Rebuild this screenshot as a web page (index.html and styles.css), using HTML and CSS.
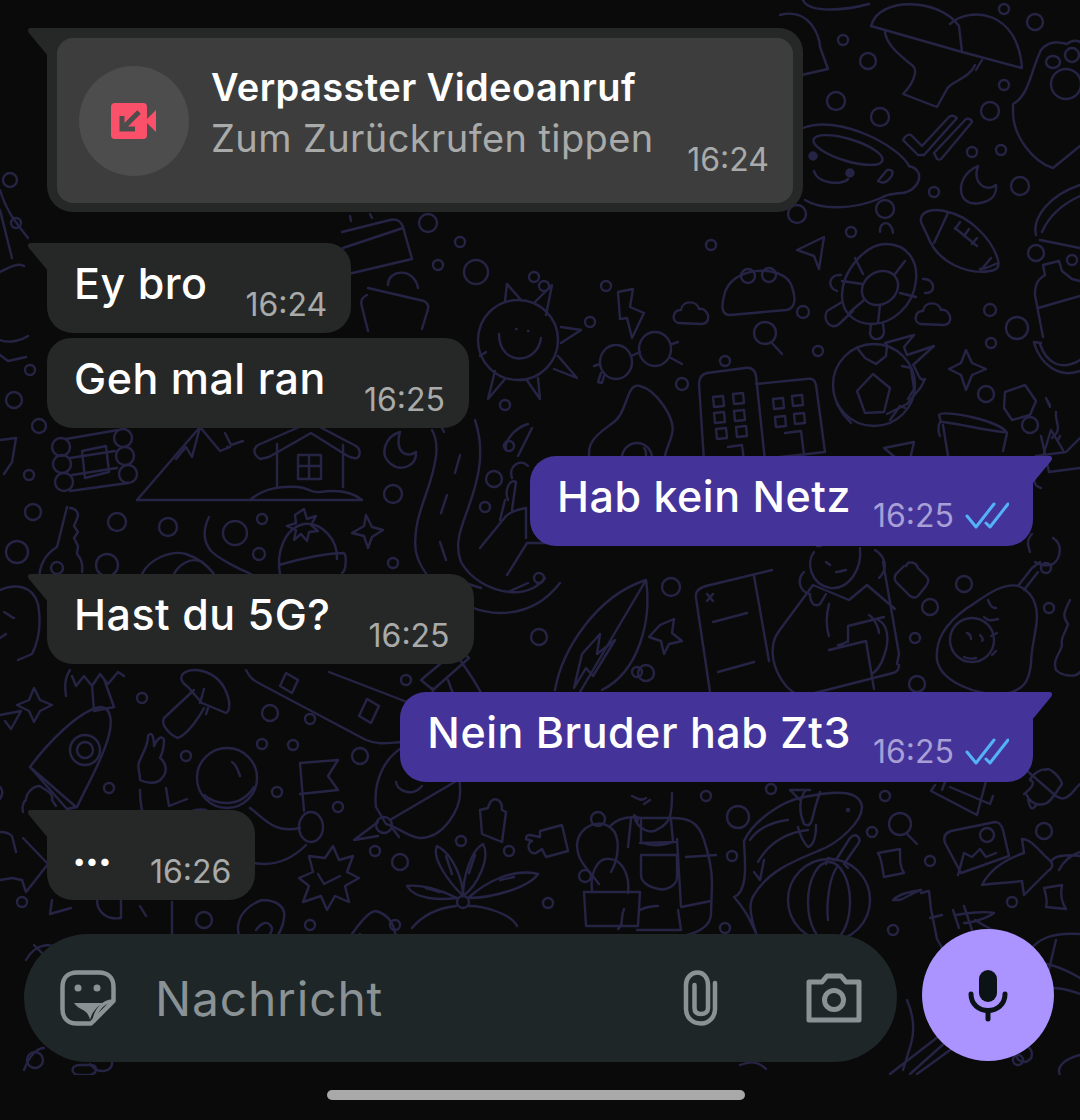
FILE: index.html
```html
<!DOCTYPE html>
<html lang="de">

<head>
    <meta charset="UTF-8">
    <meta name="viewport" content="width=device-width, initial-scale=1.0">
    <title>Chat</title>
    <link rel="stylesheet" href="styles.css">
</head>

<body>
    <div class="screen">
        <!-- Wallpaper doodles -->
        <svg class="wallpaper" viewBox="0 0 1080 1075" width="1080" height="1075" fill="none" stroke="#262445" stroke-width="2.4" stroke-linecap="round" stroke-linejoin="round">
            <!-- dots -->
            <g>
                <circle cx="843" cy="40" r="5"/><circle cx="868" cy="61" r="8"/><circle cx="836" cy="101" r="9"/><circle cx="880" cy="117" r="9"/>
                <circle cx="1004" cy="9" r="5"/><circle cx="1035" cy="22" r="8"/><circle cx="1004" cy="85" r="5"/><circle cx="990" cy="111" r="9"/>
                <circle cx="972" cy="152" r="5"/><circle cx="1001" cy="150" r="5"/><circle cx="934" cy="192" r="5"/><circle cx="1020" cy="186" r="9"/>
                <circle cx="885" cy="209" r="9"/><circle cx="797" cy="214" r="9"/><circle cx="851" cy="232" r="5"/>
                <circle cx="428" cy="223" r="9"/><circle cx="460" cy="242" r="5"/><circle cx="438" cy="265" r="5"/><circle cx="476" cy="272" r="12"/><circle cx="534" cy="277" r="5"/>
                <circle cx="711" cy="245" r="5"/><circle cx="803" cy="312" r="6"/><circle cx="590" cy="322" r="5"/><circle cx="606" cy="286" r="5"/>
                <circle cx="544" cy="286" r="5"/><circle cx="725" cy="361" r="5"/><circle cx="818" cy="351" r="5"/>
                <circle cx="990" cy="310" r="6"/><circle cx="1017" cy="328" r="11"/><circle cx="991" cy="343" r="5"/><circle cx="1036" cy="253" r="8"/><circle cx="1072" cy="260" r="5"/>
                <circle cx="505" cy="405" r="5"/><circle cx="509" cy="446" r="5"/><circle cx="682" cy="384" r="6"/><circle cx="986" cy="394" r="8"/><circle cx="1030" cy="425" r="8"/><circle cx="850" cy="476" r="5"/>
                <circle cx="29" cy="475" r="5"/><circle cx="33" cy="512" r="8"/><circle cx="17" cy="552" r="11"/><circle cx="117" cy="522" r="9"/><circle cx="168" cy="527" r="9"/>
                <circle cx="235" cy="533" r="12"/><circle cx="262" cy="519" r="5"/><circle cx="259" cy="554" r="6"/><circle cx="107" cy="565" r="11"/><circle cx="393" cy="494" r="9"/><circle cx="393" cy="563" r="5"/>
                <circle cx="494" cy="479" r="8"/><circle cx="485" cy="507" r="5"/><circle cx="39" cy="426" r="7"/>
                <circle cx="539" cy="578" r="5"/><circle cx="671" cy="587" r="9"/><circle cx="539" cy="637" r="8"/><circle cx="637" cy="672" r="5"/><circle cx="646" cy="673" r="8"/>
                <circle cx="964" cy="584" r="8"/><circle cx="930" cy="607" r="8"/><circle cx="915" cy="638" r="5"/><circle cx="1049" cy="608" r="5"/><circle cx="917" cy="684" r="8"/>
                <circle cx="406" cy="680" r="5"/><circle cx="142" cy="698" r="5"/><circle cx="270" cy="713" r="8"/><circle cx="310" cy="719" r="5"/><circle cx="262" cy="744" r="5"/><circle cx="293" cy="745" r="5"/><circle cx="186" cy="756" r="5"/>
                <circle cx="360" cy="756" r="8"/><circle cx="109" cy="788" r="5"/><circle cx="277" cy="792" r="5"/><circle cx="338" cy="807" r="5"/>
                <circle cx="461" cy="841" r="5"/><circle cx="375" cy="851" r="5"/><circle cx="400" cy="862" r="8"/><circle cx="509" cy="851" r="5"/><circle cx="548" cy="903" r="5"/><circle cx="22" cy="902" r="5"/>
                <circle cx="706" cy="796" r="5"/><circle cx="771" cy="789" r="5"/><circle cx="738" cy="817" r="11"/><circle cx="732" cy="856" r="5"/><circle cx="885" cy="796" r="5"/><circle cx="872" cy="832" r="5"/>
                <circle cx="930" cy="861" r="5"/><circle cx="1044" cy="831" r="8"/><circle cx="1012" cy="902" r="5"/><circle cx="893" cy="930" r="5"/><circle cx="725" cy="928" r="5"/>
                <circle cx="204" cy="920" r="8"/><circle cx="1018" cy="1060" r="5"/><circle cx="35" cy="1060" r="8"/><circle cx="395" cy="925" r="5"/><circle cx="310" cy="925" r="5"/>
                <circle cx="10" cy="180" r="7"/><circle cx="16" cy="223" r="5"/><circle cx="30" cy="370" r="5"/><circle cx="14" cy="400" r="8"/>
            </g>
            <!-- sun -->
            <circle cx="518" cy="340" r="40"/>
            <path d="M499 334c0 32 38 32 42 4M516 329h.5M528 331h.5"/>
            <path d="M505 301l2-17 14 16M535 302l17-17-6 30M561 327l20 3-20 13M558 356l19 22-23-9M538 378l2 21-14-20M505 379l-17 20 7-28M486 352l-6 4"/>
            <!-- glasses, bolt, cloud, lens -->
            <ellipse cx="616" cy="362" rx="16" ry="17"/><ellipse cx="655" cy="349" rx="16" ry="17"/><path d="M631 356l9-4M672 344l6-2M671 358l11 6M604 376l-2 7-4-1 3-9M600 364l-6 2"/>
            <path d="M618 292l15-3-3 18 14 6-12 25-5-20-7 1z"/>
            <path d="M678 323c-7-3-5-13 3-13 1-10 16-10 18-1 9-2 14 14 3 15z"/>
            <path d="M934 330c-7-3-5-13 3-13 1-10 16-10 18-1 9-2 14 14 3 15z" transform="translate(-14 -6)"/>
            <circle cx="765" cy="333" r="11"/><path d="M772 343l10 11"/>
            <!-- blob with eyes -->
            <path d="M724 296c6-32 62-32 68-9 5 14 2 22-6 23l-56 5c-8 0-9-8-6-19z"/><circle cx="748" cy="276" r="7"/><circle cx="769" cy="275" r="7"/>
            <path d="M797 250l27-13-5 32-5-13z"/>
            <!-- turtle -->
            <path d="M842 296c0-26 24-52 44-52 22 0 32 18 30 36-2 26-24 44-44 44-18 0-30-12-30-28z"/>
            <ellipse cx="880" cy="288" rx="19" ry="16" transform="rotate(-35 880 288)"/>
            <path d="M863 274l-8-16M895 274l10-13M900 293l16 4M880 305l-2 18M864 300l-14 12M862 284l-20-3M880 232c-1-12 12-12 13 1M837 291c-10-3-9-17 4-16M925 293c12 1 10-15-2-14M853 311l-14 13c-8 7-17-4-12-13l15-9M871 324l-1 10c3 8 13 6 14-2l-1-8"/>
            <!-- football -->
            <path d="M921 222c-2-12 14-14 27-10 20 4 44 26 50 48 2 8-2 10-8 11-22 4-52-8-62-34z"/>
            <path d="M948 213l-14 30M998 263l-12 5-6 1M991 258l-10 12M955 228l22 18M960 222l-5 7M969 229l-5 7M977 238l-5 6"/>
            <!-- bottle, banana -->
            <path d="M1045 275l-2-10 16-4 3 10 10 8 8 2M1045 275c-9 5-10 12-10 20l8 42M1038 308l42-12"/>
            <path d="M1034 343c6 20 24 36 46 28M1041 343l-7-1M1040 344c6 18 20 28 40 16"/>
            <!-- cup, check, moon -->
            <path d="M803 128c36-14 96 18 106 38 1 1 0 0 0 0 18 4 10 26-8 27-16 2-14 2-20 5-28 12-60 12-76 2"/>
            <ellipse cx="848" cy="150" rx="36" ry="11" transform="rotate(17 848 150)"/>
            <path d="M814 171c4 14 30 14 34 8M878 181l9-11c9-1 5 6 3 8-3 4-7 6-12 3z"/><circle cx="813" cy="156" r="3.5" fill="#262445"/><circle cx="850" cy="173" r="3.5" fill="#262445"/>
            <path d="M905 137l-2 3 15 15 6 0 33-37c-3-3-7-3-9 0l-26 28-11-11c-2-1-4 0-6 2zM934 153l3 6c2 1 4 1 5-1l30-36c0-2-3-4-6-3z"/>
            <path d="M978 166c-24 10-22 42 2 37 12-2 17-9 16-18-10 8-24-2-18-19z"/>
            <!-- cap -->
            <path d="M871 26c8-30 68-28 88 0l3 26z"/><path d="M950 24c20-18 68-14 72 44l-60-16M885 32c2 14 16 24 28 34 6 6-2 20-10 28l34 13 10-18c4-8 22-10 28-24M982 60l-6 10"/>
            <path d="M780 15c30-8 40 22 40 32l8 22-40 9"/>
            <path d="M803 0c6 14 44 10 66 4"/>
            <!-- paw shield -->
            <path d="M1013 104l0 8c0 24 20 50 40 56l27-22M1013 104c16-8 18-34 28-54 8-10 20-8 26-6 4-4 10-4 13-2"/>
            <ellipse cx="1053" cy="62" rx="7" ry="6"/><ellipse cx="1072" cy="55" rx="7" ry="7"/><ellipse cx="1066" cy="84" rx="15" ry="15"/>
            <path d="M1036 235c-4-18 14-40 44-50M1042 232c6-14 16-26 38-36M1040 240l40 8"/>
            <!-- suitcase and lock -->
            <path d="M342 232l48-12c8-2 11 2 13 7l9 32-68 16M343 248l60-20M350 216l1 5M370 214l2 4"/>
            <path d="M367 295c-5 2-7 6-5 12l6 24M388 285c0-16 26-18 30 3M368 288l56 13c4 2 5 6 4 8l-6 20"/>
            <!-- left side -->
            <path d="M0 190c6 20 14 30 28 48"/>
            <path d="M0 210l12 48M0 272c8-4 18-10 24-6"/>
            <path d="M0 340c10 4 22 0 28-4M0 355l8 6 18-4"/>
            <path d="M0 440l16-2-4 24-8 12"/>
            <!-- log cabin -->
            <circle cx="61" cy="447" r="9"/><circle cx="62" cy="464" r="9"/><circle cx="64" cy="482" r="9"/><circle cx="123" cy="438" r="9"/><circle cx="125" cy="456" r="9"/><circle cx="128" cy="474" r="9"/>
            <path d="M66 439l52-9M70 458l45-7M72 475l45-7M70 491l58-8"/><path d="M82 451l24-5 3 26-24 6z"/>
            <!-- mountain and house -->
            <path d="M137 500l63-73M137 500h224M200 427l20 24 10-4-3 0M200 427l-8 30-6-10-10 12"/><path d="M225 433l6 12 12-4"/>
            <path d="M277 444v44M343 445v42M260 459c-6-4-8-10-2-14l48-21c3-1 7-1 10 1l40 21c6 4 4 14-2 12-4 0-6-2-8-3l-35-22-42 24z"/>
            <path d="M298 455h23v24h-23zM309 455v24M298 466h23"/>
            <path d="M250 500c14-12 30-14 48-13 12 1 12 6 22 5 14-2 30-2 42 8"/>
            <path d="M400 432c-14 4-22 22-9 32 10 8 26 2 25-12-8 6-22 2-16-20z"/>
            <!-- river -->
            <path d="M432 430c8 14 4 32-2 52-6 20-18 44-14 70 6 28 44 60 84 61 26 0 46-12 60-30M475 420c10 30 4 56-4 80-8 24-18 42-10 62 10 18 30 28 48 30 18 2 30-6 36-14"/>
            <path d="M460 455l-5 18M447 495l-6 18M440 542l6 18M465 583l16 5M508 592l20-9M442 428l2 4"/>
            <!-- leaves near right bubble -->
            <path d="M480 548l26-32c6-6 20-8 20-8v30M507 575l20-32 20 0M506 450c-2-8 8-22 22-26M532 428l-14 28"/>
            <!-- egg avocado -->
            <path d="M590 460c-6-20 14-30 24-38 14-10 12-40 26-36 16 4 36 32 32 48-4 16-10 20-6 34l2 10"/><circle cx="637" cy="458" r="15"/><path d="M644 448c3 3 2 6 2 8"/>
            <!-- flower left of bubble -->
            <path d="M508 500c-4-10 2-22 8-18l-4 28M512 478c-4-12 8-20 16-12M505 500l-5 20M536 485c10-6 22-6 24 2-2 10-18 8-24 2"/>
            <!-- buildings -->
            <path d="M704 461l-5-77c0-8 4-10 8-11l38-5c7-1 10 2 11 8l9 85"/><path d="M756 384l50-5c7-1 9 1 10 6l9 67-62 7"/>
            <path d="M713 397l10-1 1 10-10 1zM733 394l10-1 1 10-10 1zM714 413l10-1 1 10-10 1zM734 411l10-1 1 10-10 1zM716 429l10-1 1 10-10 1zM736 427l10-1 1 10-10 1zM773 399l10-1 1 10-10 1zM792 396l10-1 1 10-10 1zM775 417l10-1 1 10-10 1zM794 414l10-1 1 10-10 1zM728 447l14-2 2 16M785 433l16-2 3 24"/>
            <!-- soccer ball -->
            <circle cx="874" cy="385" r="41"/><path d="M858 349l7 9 11 6 10-8 1-11M857 391l16-17 17 14-6 24-19 1zM902 366l9 2 3 21-6 10M837 404l6 10 8 9M890 420l10-14 5 2"/>
            <path d="M885 343l29-8-10 12 3 8 27-9-21 19c4 4 6 18 12 14l-4 8-14 17-20 10"/>
            <path d="M966 350l6 13 14 6-14 6-6 15-5-15-12-6 12-6z"/>
            <!-- pot -->
            <path d="M940 436c-3-6-1-14 1-14l-2-7c4-6 62 6 68 18l-4 18M943 422c18 2 50 10 62 10M943 425l5 31"/>
            <path d="M1009 465l-3-6"/>
            <!-- tent and right -->
            <path d="M1050 405l-4-7 4 9M1036 456l30-4 14-14M1041 436l8 36 31-4M1041 470c-8 3-10 15 0 18M1043 456l8-26 12 20"/>
            <path d="M1056 412c-2 10 8 16-4 26M1060 436l-2 4"/>
            <path d="M1005 392l20-7 11 16-6 14-18 5-8-12z"/>
            <path d="M884 448l30-6-6 26z"/>
            <!-- key, sushi, hat, star -->
            <path d="M67 507l-10 40c-10 6-18 16-18 34M70 508c3 0 8 2 8 8l-4 10 4 6-4 6 4 8-1 8c4 4 6 10 5 18"/><circle cx="57" cy="568" r="6"/>
            <path d="M142 574c8-16 30-24 44-20 12 4 22 12 28 20M174 574c4-8 16-18 28-12"/>
            <path d="M280 574c-4-20 4-46 24-50 18-2 34 16 33 35M279 565c14-4 44-12 65-12 3 4 2 18-2 20"/>
            <path d="M304 509l3 10 9-3-5 9 7 6-9 1-2 9-6-7-7 6 2-10-9-4 9-3-1-8z"/>
            <path d="M366 515l6 12 11 3-11 7-4 11-4-12-12-3 12-7z"/>
            <path d="M209 517c-6 12-6 24 2 34 8 8 28 18 40 23"/>
            <!-- avocado far left, palm under bubble -->
            <path d="M0 590c14-6 32-6 38 14 4 22 0 38-6 50l-14 6M4 612c4 2 8 6 10 6M6 634l-6 4"/>
            <path d="M66 696c-2-14 0-20 4-26M72 676l4 10 8-10 8 10 8-12 8 10 10-12 6 4M104 679l10 28-20 4-2-26"/>
            <path d="M34 688l6 12 12 5-12 6-6 11-5-11-12-6 12-5z"/>
            <!-- mushroom -->
            <path d="M182 675c8-10 38-6 46 22 2 6 2 14-2 16l-24-10-14-16c-6-4-8-8-6-12zM194 690l-30 28c-4 8 8 18 14 20 10-4 22-22 26-30"/><path d="M200 703l4-14M208 708l-2 6"/>
            <!-- drum -->
            <path d="M421 680l38-32 10 10-36 32zM432 688l4 16M448 680l8 22M460 660c10 14 22 32 26 44"/>
            <path d="M434 645c0 2-8 6-8 6M246 670c4 8 6 10 22 18l98 52c14 6 26 2 38 2M329 672l78 30"/>
            <path d="M286 673l12 7-6 13-12-7zM367 699l12 7-8 17-12-7z"/>
            <!-- surfboard and lightning -->
            <path d="M646 580c-50 16-84 70-91 110M646 580c6 42-8 92-44 110M646 580l-66 112"/><path d="M582 654l18-20-3 20 18-14-22 36-7-8-12 20z"/>
            <path d="M660 625l14-6-2 14 10 8-13 3-5 10-3-13-12-4z"/>
            <!-- lady with notebook -->
            <path d="M772 570l-66 16c-8 2-11 6-10 12l14 94M754 576l15 85M713 622l34-9M718 672l36-10M707 594l6 7M713 594l-6 7"/>
            <path d="M897 664l2-10-16-92M899 665c0 4-2 7-6 8l-86 22c-8 2-16-4-20-8-14-16-20-40-8-56l34-46 36 15 18-15 28 24"/>
            <path d="M829 650l37-9 8 48M829 636c-4-12-2-24 0-32M838 645c4 0 10-4 10-4M848 642l0-16 36-9M878 620c10 4 12 20 6 36-2 6-6 14-12 18M869 615c6 4 10 14 10 18"/>
            <path d="M804 572c-8 8-4 20 6 22 0 8 4 14 10 10l6-10M875 550c10 6 14 18 4 28M814 552c-8 10-4 32 16 36 20 2 32-20 30-40M826 562l4 3M836 572c4 0 8-2 10-2M817 546h4"/>
            <path d="M906 566c2-6 10-4 12 2l8 8c3 2 3 6 0 10l-8 10c-2 2-5 2-8 0l-14-14c-2-3-2-5 0-8l8-8"/>
            <!-- avocado baby -->
            <path d="M1019 586c-18-4-36 12-52 22-22 16-32 32-30 52 4 22 40 36 68 34 20-4 24-14 26-30 0-22 10-44 4-60-2-8-8-14-16-18z"/>
            <circle cx="972" cy="640" r="22"/><path d="M967 633c3 1 4 3 4 6M980 635c2 2 4 4 2 6M964 657c4 2 8 2 12 1M991 636l6-3M992 655l4-4M988 600c2 6 4 8 8 8M984 617c4 4 6 4 14 2"/>
            <path d="M1018 586l14-18 8-6M1024 590l14-18"/><circle cx="1046" cy="568" r="5"/><path d="M1030 552c-2-6-4-12 2-18M1053 538c10 6 8 20 0 26-6 2-12 2-18-2"/>
            <path d="M1070 600c-6 12-8 16-2 24-2 8-8 14-6 20 0 8-10 14-6 26 6 6 20 8 24 2"/>
            <!-- rocket, hand, astronaut -->
            <path d="M30 767c16-22 48-56 70-60 12 0 12 16 9 28-6 24-22 50-32 72l-10 2zM30 767l46 40"/>
            <circle cx="85" cy="750" r="15"/><circle cx="85" cy="750" r="8"/>
            <path d="M26 800c0-6 6-14 14-14 4 4 14 6 12 14l4 6M23 812c-2-6 2-12 3-12"/>
            <path d="M0 715l21-4-10 18-6-8M0 787c4 4 2 8 0 12"/>
            <path d="M0 832c2 0 8 0 12 4l4 16M23 838l25 26-22 28-4-12-10-2-12 2"/>
            <path d="M140 780c0-10-4-14 0-20 4-10 8-14 8-24 4-6 6 2 6 10 2-6 8-12 10-6 0 6-2 14-4 18 6 4 8 14 2 20-4 6-14 6-22 2zM166 788l3 18 18-7M140 790c0 8 0 20 6 30"/>
            <ellipse cx="227" cy="778" rx="30" ry="30"/><path d="M204 795c12 10 36 14 50-8M232 762c4 2 6 8 8 14M206 810c-8-2-26 2-28 12M250 808c14 10 24 26 50 20"/>
            <path d="M300 763l38-3-10 16 10 14-38 4M300 763l4 48"/><ellipse cx="311" cy="827" rx="12" ry="15"/>
            <path d="M306 845c-14 14-30 22-52 18"/>
            <!-- globe propeller -->
            <path d="M407 745c-22 10-34 36-31 62l10 17c10 2 24 14 34 14 24 0 42-30 40-50 0-14-4-22-8-24"/><path d="M390 820l68-40M396 782c0 8 16 16 26 4"/><circle cx="384" cy="825" r="8"/><path d="M378 822l-24 18 24-4M393 829l6 8"/>
            <path d="M480 810l8-2c2-8 6-10 10-8 4 2 4 6 4 10l4 2-4 30-20-8z"/>
            <path d="M530 835l10 2 0-6 22-6 6 26-22 6-4-8-6 4c-8 2-10-10-4-12l-6-2c0-2 0-4 4-4z"/>
            <!-- burst, flower -->
            <path d="M325 858l8-12 6 14 14-4-6 16 12 6-14 8 4 16-14-6-8 14-6-14-18 6 6-16-10-8 14-6-4-16z"/><path d="M318 874l6 10 16-8"/>
            <circle cx="463" cy="902" r="6"/><path d="M463 896c-14-14-32-38-26-50 16 8 26 34 26 50zM463 896c0-18 8-46 20-52 8 14-6 42-20 52zM468 898c18-16 44-30 70-24-10 14-46 24-70 24zM457 898c-16-8-36-14-50-12 8 14 34 14 50 12zM469 906c16 0 42 8 48 20M456 906c-18 2-34 10-44 22"/>
            <path d="M446 856l6 18M475 855l-6 18M500 880l14-3M426 888l14 4"/>
            <!-- lower left -->
            <path d="M52 900l-2 14 21-6"/><path d="M97 900c0 14 12 20 24 18v-18M172 902v32l-8 16M140 906l6 10"/>
            <path d="M262 900c-12 4-24 14-24 28 0 10 6 22 16 26 12-2 28-18 30-36 2-10-6-18-22-18M256 930c6-8 12-10 16-2 0 8-10 14-20 14"/>
            <path d="M340 955c6-14 26-44 36-44 14 4 20 16 20 32l-6 12M360 934l-14 22"/>
            <!-- gardener with cactus -->
            <path d="M634 815c8 6 2 8 0 2 4 12 16 18 24 12 12-6 14-12 14-36M632 796c4 2 10 6 14 2M650 800l-6 4"/>
            <path d="M610 826c8-8 20-10 32-8l16 0 14 0c14 0 26 2 32 22 4 12 8 28 8 44l-1 30c0 12-14 20-30 22l-38 8-12 14"/>
            <path d="M631 819l-3 28M641 820v22c8 4 20 4 32 0l-2-22M640 843l36-1M641 855h36v22c0 8-10 14-18 12-12-2-18-8-18-14zM677 839l4 68 30-6M686 857l30-2"/>
            <path d="M599 884c-14-18-22-24-22-40 2-18 22-26 34-16 10 8 8 30 0 44"/><circle cx="598" cy="819" r="7"/>
            <path d="M592 890c-2-14 4-30 14-31 16-2 24 16 22 34"/><circle cx="585" cy="876" r="6"/>
            <path d="M584 892h56l-2 34h-52zM624 909c-4 10 0 16-6 20M640 910c4-2 12-4 18-4"/>
            <path d="M637 930h44l-3-20"/>
            <!-- fish -->
            <path d="M734 897c16-6 10-44 10-56 8-18 36-40 60-44 30-6 56-8 58 10 0 14-22 36-44 44-24 10-50 20-64 44-4 6-6 14 2 38-6-12-8-20-22-36zM800 800l-10-10 20 0"/>
            <path d="M750 840c6-10 20-18 38-20M758 862c10-18 28-30 50-32M806 790c-6 6-8 20-2 34 6 4 8-2 10-12 2-8 4-14 6-20M816 825c0 10-2 20-8 22-6-6-8-12-10-20M764 860l-4 20-6-8"/>
            <circle cx="848" cy="810" r="1"/>
            <!-- pumpkin -->
            <circle cx="829" cy="900" r="41"/><ellipse cx="829" cy="902" rx="21" ry="40"/><path d="M826 864l2-6 8 2 14-22c6-6 12 0 8 6l-14 20 4 4"/><path d="M838 866c-8 8-12 36-10 54"/>
            <!-- magnifier, photo, arrow, stars -->
            <circle cx="900" cy="824" r="11"/><path d="M907 834l10 10"/>
            <path d="M935 785l-4 6 46 24 10-38M942 790l9-24M950 787l40 17 3-8"/>
            <path d="M945 843c-2-6 0-10 6-12l44-9c4 0 6 2 8 8l6 26-48 17zM958 875l6-22 8 4 8-8 6 8 10-4"/><circle cx="987" cy="835" r="7"/>
            <path d="M982 885c8-16 24-26 42-32l-2-14c8 0 14 8 24 18 8 6 8 10 2 14l-24 24-2-14c-14 2-28 2-40 4z"/>
            <path d="M878 853l22-4c0 12 0 18 4 24l-20 4c-2-10-2-18-6-24z"/><path d="M1044 888l18-3c-2 10 0 18 4 24l-20-2c2-6 0-12-2-19z"/>
            <path d="M1024 794c8-6 12-12 6-14 2-6 12-12 16-10 2-4 14 6 16 14-6 8-12 20-18 20-8 2-14-2-18-10M1028 799c2 10 4 12 8 6"/>
            <path d="M1026 770l30 26c8 6 14 0 20-8l4-4"/>
            <path d="M1059 870c4-8 10-14 21-18M1051 862c2-6 14-8 29-6"/>
            <!-- pickaxe, leaves -->
            <path d="M893 900c6-6 16-8 28-10-8 2-14 8-22 10zM921 893l8-2 2 18 6 30 14 24M930 918l12-3M953 910l6 18M956 915c10-2 30-4 38-2-8 6-24 10-30 10M964 906l8 24"/>
            <!-- bottom strip -->
            <path d="M26 960c10-18 30-20 40-4M34 945l18 18M80 1065c-10 0-10 10 0 10h10c8-2 8-10 0-10z"/>
            <path d="M740 1065c10-4 18-4 26 4"/>
            <path d="M24 1070c6-16 14-22 20-22"/><path d="M90 1064c6 10 24 10 22-4"/>
            <path d="M907 1000c6 14 8 30 4 44l-8 26"/>
            <path d="M890 1074l62-48 14-2-56 50M917 1074l58-42"/>
            <path d="M975 920l10 6 16 8M1030 950c8-10 20-18 50-16M1030 962c12 0 30 4 50 16M1056 940l-12 50M1030 1000c0-6 10-12 22-12 14 0 28 6 28 6"/>
            <path d="M1060 1075c-4-8 4-16 20-20"/>
            <circle cx="1024" cy="1054" r="8"/>
        </svg>

        <main class="chat">
            <div class="bubble in call-card">
                <div class="call-inner">
                    <div class="call-avatar">
                        <svg width="48" height="38" viewBox="0 0 48 38">
                            <rect x="1" y="1" width="36" height="36" rx="4" fill="#fb5069"/>
                            <path d="M36 18L46 8V30L36 20Z" fill="#fb5069"/>
                            <path d="M29 10L13 26M12 14V27H25" fill="none" stroke="#4c4c4c" stroke-width="5"/>
                        </svg>
                    </div>
                    <div class="call-text">
                        <div class="call-title">Verpasster Videoanruf</div>
                        <div class="call-sub">Zum Zurückrufen tippen</div>
                    </div>
                    <span class="time call-time">16:24</span>
                </div>
            </div>

            <div class="bubble in first"><span class="text">Ey bro</span><span class="time">16:24</span></div>
            <div class="bubble in cont"><span class="text">Geh mal ran</span><span class="time">16:25</span></div>

            <div class="bubble out"><span class="text">Hab kein Netz</span><span class="time">16:25</span>
                <svg class="ticks" width="44" height="28" viewBox="0 0 44 28" fill="none" stroke="#53b2f8" stroke-width="3" stroke-linecap="round" stroke-linejoin="round">
                    <path d="M2 15l9 11L29 3"/><path d="M21 22l4 4L43 3"/>
                </svg>
            </div>

            <div class="bubble in"><span class="text">Hast du 5G?</span><span class="time">16:25</span></div>

            <div class="bubble out"><span class="text">Nein Bruder hab Zt3</span><span class="time">16:25</span>
                <svg class="ticks" width="44" height="28" viewBox="0 0 44 28" fill="none" stroke="#53b2f8" stroke-width="3" stroke-linecap="round" stroke-linejoin="round">
                    <path d="M2 15l9 11L29 3"/><path d="M21 22l4 4L43 3"/>
                </svg>
            </div>

            <div class="bubble in"><span class="text dots">...</span><span class="time">16:26</span></div>
        </main>

        <div class="footer">
            <div class="composer">
                <svg class="icon-sticker" width="56" height="56" viewBox="0 0 56 56" fill="none" stroke="#8a9295" stroke-width="4.500" stroke-linejoin="round">
                    <path d="M17 2.500H39C48 2.500 53.500 8 53.500 17V31L31 53.500H17C8 53.500 2.500 48 2.500 39V17C2.500 8 8 2.500 17 2.500Z"/>
                    <path d="M53 31C43 31 35 41 34 52" stroke-width="3.500"/>
                    <path d="M14 33H44C37 36 32 42 30 50C29 45 27 42 23 40C19 38 16 36 14 33Z" fill="#8a9295" stroke="none"/>
                    <circle cx="18" cy="18" r="3.500" fill="#8a9295" stroke="none"/>
                    <circle cx="37" cy="18" r="3.500" fill="#8a9295" stroke="none"/>
                </svg>
                <span class="placeholder">Nachricht</span>
                <svg class="icon-clip" width="36" height="56" viewBox="0 0 36 56" fill="none" stroke="#8a9295" stroke-width="4.500" stroke-linecap="round">
                    <path d="M32 13V39C32 47 26 53.500 18 53.500C9 53.500 3 47 3 39V15C3 8 8 2.500 14.500 2.500C21 2.500 25 8 25 15V38C25 42 22 44 18 44C14 44 11.500 42 11.500 38V15"/>
                </svg>
                <svg class="icon-camera" width="56" height="50" viewBox="0 0 56 50" fill="none" stroke="#8a9295" stroke-width="5" stroke-linejoin="round">
                    <path d="M3 9H16L21 3H35L40 9H53V47H3Z"/>
                    <circle cx="28" cy="27" r="9.500"/>
                </svg>
            </div>
            <div class="mic">
                <svg width="40" height="54" viewBox="0 0 40 54" fill="none" stroke="#0b1317" stroke-linecap="round">
                    <rect x="11" y="2" width="18" height="32" rx="9" fill="#0b1317" stroke="none"/>
                    <path d="M3 26C3 48 37 48 37 26" stroke-width="5"/>
                    <path d="M20 44V51" stroke-width="5"/>
                </svg>
            </div>
        </div>

        <div class="home-bar"></div>
    </div>
</body>

</html>
```
FILE: styles.css
```css
* {
    box-sizing: border-box;
}

body {
    margin: 0;
    background: #0a0a0b;
    font-family: Inter, "Liberation Sans", sans-serif;
}

.screen {
    position: relative;
    width: 1080px;
    height: 1120px;
    overflow: hidden;
    background: #0a0a0b;
}

.wallpaper {
    position: absolute;
    top: 0;
    left: 0;
}

.chat {
    position: relative;
    display: flex;
    flex-direction: column;
    padding: 28px 47px 0;
}

.bubble {
    position: relative;
    display: flex;
    align-items: flex-start;
    height: 90px;
    margin-top: 28px;
    padding: 15px 24px 0 27px;
    width: fit-content;
    border-radius: 0 24px 26px 26px;
}

.bubble::before {
    content: "";
    position: absolute;
    top: 0;
    width: 20px;
    height: 28px;
}

.in {
    background: #262827;
}

.in::before {
    left: -19px;
    background: #262827;
    clip-path: path("M3 0H20V28L1 5C-1 2 0 0 3 0Z");
}

.out {
    align-self: flex-end;
    background: #443399;
    border-radius: 26px 0 26px 26px;
}

.out::before {
    right: -19px;
    background: #443399;
    clip-path: path("M0 0H17C20 0 21 2 19 5L0 28Z");
}

.cont::before {
    display: none;
}

.cont {
    margin-top: 5px;
    border-radius: 24px 24px 26px 26px;
}

.first {
    margin-top: 31px;
}

.text {
    color: #fff;
    font-size: 43px;
    font-weight: 450;
    letter-spacing: 0.5px;
    line-height: 50px;
}

.dots {
    width: 40px;
    margin-left: -2px;
    font-weight: 700;
    letter-spacing: -1.5px;
}

.time {
    margin: 27px 0 0 38px;
    color: #a9abaa;
    font-size: 32px;
    line-height: 40px;
}

.out .time {
    margin: 25px 0 0 22px;
    color: #a79fd6;
}

.ticks {
    margin: 30px 0 0 11px;
}

/* missed call card */
.call-card {
    width: 756px;
    height: 184px;
    margin-top: 0;
    padding: 10px;
}

.call-inner {
    display: flex;
    width: 736px;
    height: 165px;
    padding: 28px 24px 0 22px;
    background: #3d3d3d;
    border-radius: 16px;
}

.call-avatar {
    display: flex;
    flex: none;
    align-items: center;
    justify-content: center;
    width: 110px;
    height: 110px;
    border-radius: 50%;
    background: #4d4d4d;
}

.call-text {
    flex: 1;
    margin-left: 22px;
}

.call-title {
    margin-top: -1px;
    color: #fff;
    font-size: 38px;
    font-weight: 600;
    letter-spacing: 0.4px;
    line-height: 44px;
}

.call-sub {
    margin-top: 7px;
    color: #a9abaa;
    font-size: 38px;
    letter-spacing: 0.4px;
    line-height: 44px;
}

.call-time {
    margin: 74px 0 0;
}

/* bottom input */
.footer {
    position: relative;
    display: flex;
    align-items: flex-start;
    gap: 25px;
    margin-top: 29px;
    padding-left: 24px;
}

.composer {
    display: flex;
    align-items: center;
    width: 873px;
    height: 128px;
    margin-top: 5px;
    padding-left: 36px;
    border-radius: 64px;
    background: #1f2628;
}

.placeholder {
    flex: 1;
    margin-left: 39px;
    color: #8a9295;
    font-size: 48px;
    letter-spacing: 0.8px;
}

.icon-clip {
    margin-right: 87px;
}

.icon-camera {
    margin-right: 35px;
}

.mic {
    display: flex;
    flex: none;
    align-items: center;
    justify-content: center;
    width: 132px;
    height: 132px;
    border-radius: 50%;
    background: #ab94ff;
}

.home-bar {
    position: relative;
    width: 418px;
    height: 10px;
    margin: 28px 0 0 327px;
    border-radius: 5px;
    background: #a9a9a9;
}
```
